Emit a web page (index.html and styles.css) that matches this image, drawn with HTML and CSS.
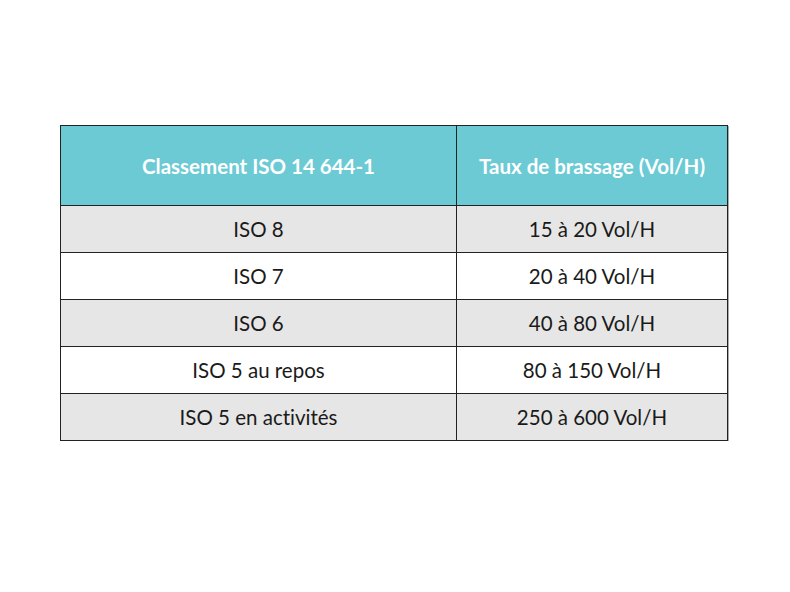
FILE: index.html
```html
<!DOCTYPE html>
<html>
<head>
<meta charset="utf-8">
<link rel="stylesheet" href="styles.css">
</head>
<body>
<div class="page">
  <table class="grid">
    <thead>
      <tr><th class="c1">Classement ISO 14 644-1</th><th class="c2">Taux de brassage (Vol/H)</th></tr>
    </thead>
    <tbody>
      <tr class="alt"><td>ISO 8</td><td>15 à 20 Vol/H</td></tr>
      <tr><td>ISO 7</td><td>20 à 40 Vol/H</td></tr>
      <tr class="alt"><td>ISO 6</td><td>40 à 80 Vol/H</td></tr>
      <tr><td>ISO 5 au repos</td><td>80 à 150 Vol/H</td></tr>
      <tr class="alt"><td>ISO 5 en activités</td><td>250 à 600 Vol/H</td></tr>
    </tbody>
  </table>
</div>
</body>
</html>
```
FILE: styles.css
```css
html, body { margin: 0; padding: 0; background: #fff; }
.page { padding: 125px 0 0 60px; }
.grid {
  border-collapse: collapse;
  font-family: Lato, "Open Sans", sans-serif;
  font-size: 20.5px;
  font-variant-ligatures: none;
  color: #1a1a1a;
  box-shadow: 1px 1px 0 #aaa;
}
.grid th, .grid td {
  border: 1px solid #222;
  text-align: center;
  padding: 0;
}
.grid th {
  background: #6bcad4;
  color: #fff;
  font-weight: bold;
  height: 79px;
}
.grid td { height: 46px; }
.c1 { width: 395px; }
.c2 { width: 270px; }
.alt td { background: #e6e6e6; }
```
